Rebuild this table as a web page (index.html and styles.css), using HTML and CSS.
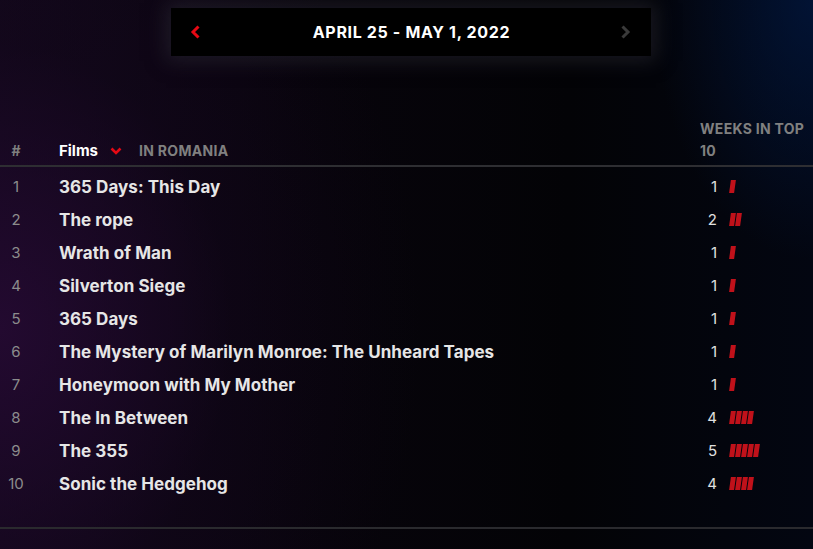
FILE: index.html
```html
<!DOCTYPE html>
<html lang="en">
<head>
<meta charset="utf-8">
<title>Top 10 Films</title>
<link rel="stylesheet" href="styles.css">
</head>
<body>
<div class="page">
  <div class="nav">
    <button class="arrow prev" aria-label="Previous week">
      <svg width="12" height="14" viewBox="0 0 12 14"><path d="M8.5 1.5 L3 7 L8.5 12.5" fill="none" stroke="#e50914" stroke-width="3"/></svg>
    </button>
    <div class="range">April 25 - May 1, 2022</div>
    <button class="arrow next" aria-label="Next week">
      <svg width="12" height="14" viewBox="0 0 12 14"><path d="M3.5 1.5 L9 7 L3.5 12.5" fill="none" stroke="#3a3a3a" stroke-width="3"/></svg>
    </button>
  </div>

  <div class="table">
    <div class="head">
      <div class="rank">#</div>
      <div class="title-col">
        <span class="cat">Films</span>
        <svg class="chev" width="12" height="8" viewBox="0 0 12 8"><path d="M1.5 1.5 L6 6 L10.5 1.5" fill="none" stroke="#e50914" stroke-width="2.6"/></svg>
        <span class="country">In Romania</span>
      </div>
      <div class="weeks-col">Weeks in Top 10</div>
    </div>
    <div class="rows">
      <div class="row"><div class="rank">1</div><div class="name">365 Days: This Day</div><div class="weeks"><span class="num">1</span><span class="bars"><i></i></span></div></div>
      <div class="row"><div class="rank">2</div><div class="name">The rope</div><div class="weeks"><span class="num">2</span><span class="bars"><i></i><i></i></span></div></div>
      <div class="row"><div class="rank">3</div><div class="name">Wrath of Man</div><div class="weeks"><span class="num">1</span><span class="bars"><i></i></span></div></div>
      <div class="row"><div class="rank">4</div><div class="name">Silverton Siege</div><div class="weeks"><span class="num">1</span><span class="bars"><i></i></span></div></div>
      <div class="row"><div class="rank">5</div><div class="name">365 Days</div><div class="weeks"><span class="num">1</span><span class="bars"><i></i></span></div></div>
      <div class="row"><div class="rank">6</div><div class="name">The Mystery of Marilyn Monroe: The Unheard Tapes</div><div class="weeks"><span class="num">1</span><span class="bars"><i></i></span></div></div>
      <div class="row"><div class="rank">7</div><div class="name">Honeymoon with My Mother</div><div class="weeks"><span class="num">1</span><span class="bars"><i></i></span></div></div>
      <div class="row"><div class="rank">8</div><div class="name">The In Between</div><div class="weeks"><span class="num">4</span><span class="bars"><i></i><i></i><i></i><i></i></span></div></div>
      <div class="row"><div class="rank">9</div><div class="name">The 355</div><div class="weeks"><span class="num">5</span><span class="bars"><i></i><i></i><i></i><i></i><i></i></span></div></div>
      <div class="row"><div class="rank">10</div><div class="name">Sonic the Hedgehog</div><div class="weeks"><span class="num">4</span><span class="bars"><i></i><i></i><i></i><i></i></span></div></div>
    </div>
  </div>
</div>
</body>
</html>
```

FILE: styles.css
```css
* { box-sizing: border-box; }
html, body {
  margin: 0;
  padding: 0;
  width: 813px;
  height: 549px;
  overflow: hidden;
  background: #040406;
}
.page {
  width: 813px;
  height: 549px;
  font-family: Inter, "Noto Sans", "Liberation Sans", sans-serif;
  color: #fff;
  background:
    radial-gradient(ellipse 160px 260px at 813px 0px, rgba(0, 35, 95, 0.45), rgba(0, 20, 60, 0) 100%),
    radial-gradient(ellipse 420px 520px at 0px 330px, rgba(38, 10, 52, 0.85), rgba(20, 6, 30, 0.35) 55%, rgba(0, 0, 0, 0) 100%),
    linear-gradient(90deg, #12081a 0%, #07040b 40%, #030306 70%, #030611 100%);
  padding-top: 8px;
  display: flex;
  flex-direction: column;
}
.nav {
  margin-left: 171px;
  width: 480px;
  height: 48px;
  background: #000;
  box-shadow: 0 0 18px 5px rgba(45, 45, 55, 0.5);
  display: flex;
  align-items: center;
  justify-content: space-between;
  padding: 0 20px 0 19px;
}
.arrow {
  background: none;
  border: 0;
  padding: 0;
  width: 12px;
  height: 14px;
  display: flex;
}
.range {
  font-weight: 700;
  font-size: 16px;
  letter-spacing: 0.65px;
  text-transform: uppercase;
  color: #fff;
  margin-left: 2px;
}
.table {
  margin-top: 62px;
  border-bottom: 2px solid #2a2a2e;
  padding-bottom: 27px;
}
.head {
  display: flex;
  align-items: flex-end;
  border-bottom: 2px solid #2e2e32;
  padding-bottom: 3px;
}
.rank {
  width: 32px;
  text-align: center;
  color: #8c8c8c;
  font-size: 15px;
  font-weight: 400;
  flex: none;
}
.head .rank {
  font-weight: 700;
  font-size: 14px;
  color: #7f7f7f;
  line-height: 22px;
}
.title-col {
  flex: 1;
  margin-left: 27px;
  display: flex;
  align-items: center;
  line-height: 22px;
}
.cat {
  font-weight: 700;
  font-size: 15px;
  color: #fff;
}
.chev { margin-left: 12px; margin-right: 17px; }
.country {
  font-weight: 700;
  font-size: 14px;
  color: #808080;
  text-transform: uppercase;
  letter-spacing: 0.3px;
}
.weeks-col {
  width: 113px;
  padding-right: 4px;
  font-weight: 700;
  font-size: 14px;
  line-height: 22px;
  color: #808080;
  text-transform: uppercase;
  letter-spacing: 0.3px;
}
.rows { padding-top: 3px; }
.row {
  display: flex;
  align-items: center;
  height: 33px;
}
.name {
  flex: 1;
  margin-left: 27px;
  font-weight: 700;
  font-size: 17px;
  letter-spacing: 0.05px;
  color: #e6e6e6;
}
.weeks {
  width: 113px;
  display: flex;
  align-items: center;
}
.num {
  width: 17px;
  text-align: right;
  font-size: 15px;
  color: #e0e0e0;
}
.bars {
  display: flex;
  gap: 1px;
  margin-left: 13px;
}
.bars i {
  display: block;
  width: 5px;
  height: 13px;
  background: #c0111a;
  transform: skewX(-8deg);
}
```
